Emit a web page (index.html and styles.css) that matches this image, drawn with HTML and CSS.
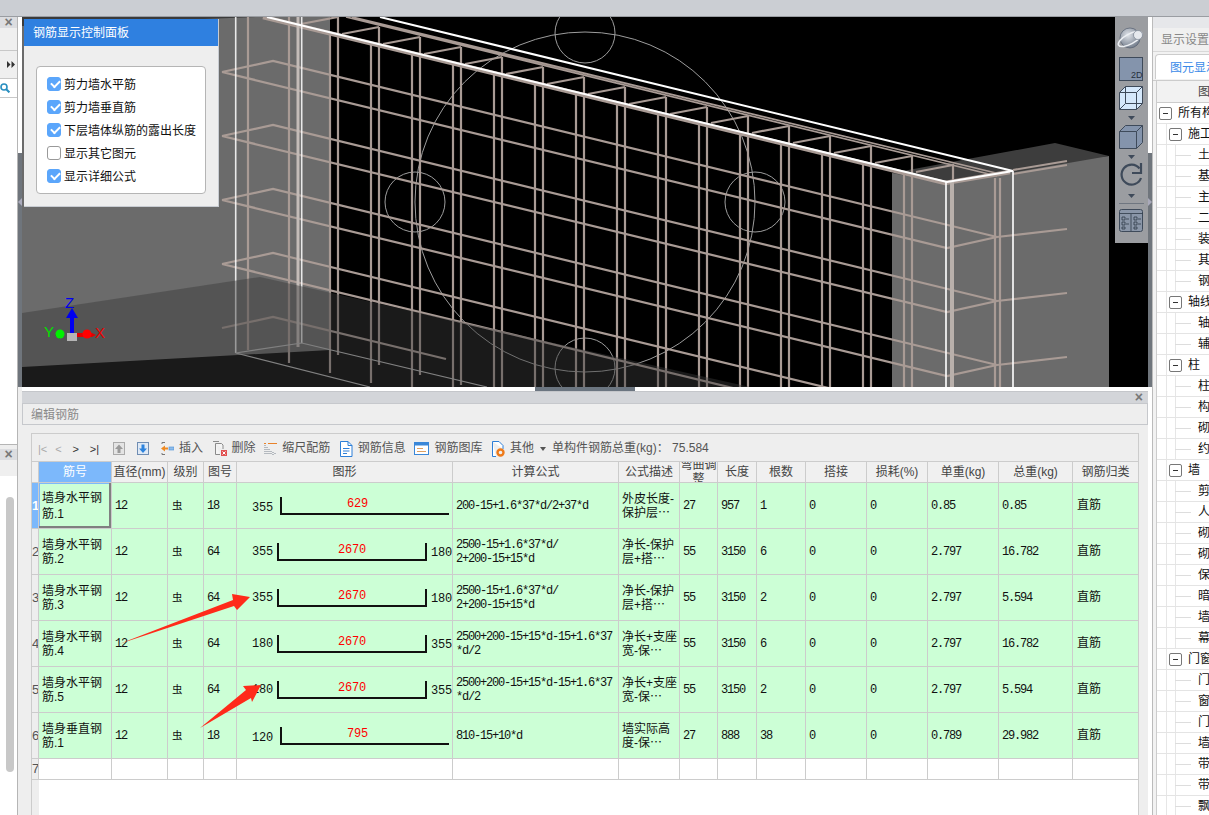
FILE: index.html
```html
<!DOCTYPE html>
<html lang="zh-CN">
<head>
<meta charset="utf-8">
<title>钢筋</title>
<link rel="stylesheet" href="styles.css">
</head>
<body>
<div class="topbar"></div>
<div class="main">
  <aside class="left">
    <div class="left-col">
      <div class="left-head"><span class="x">×</span></div>
      <div class="left-band"></div>
      <div class="left-arrows"><svg width="8" height="7" viewBox="0 0 8 7"><path d="M0 0L3.500 3.500L0 7ZM4.500 0L8 3.500L4.500 7Z" fill="#333"/></svg></div>
      <div class="left-search">
        <svg width="10" height="10" viewBox="0 0 10 10"><circle cx="4" cy="4" r="3" fill="none" stroke="#2a8fc0" stroke-width="1.6"/><path d="M6 6l3.400 3.400" stroke="#2a8fc0" stroke-width="2"/></svg>
      </div>
      <div class="left-blank"></div>
      <div class="left-gap"></div>
      <div class="left-head"><span class="x">×</span></div>
      <div class="left-scroll"><div class="thumb"></div></div>
    </div>
    <div class="left-strip"><span class="strip-top"></span><span class="strip-mid"><i class="tri-left"></i></span><span class="strip-bot"></span></div>
  </aside>

  <section class="center">
    <div class="scene">
      <svg class="scene-svg" width="1126" height="370" viewBox="22 17 1126 370">
        <defs>
          <radialGradient id="ball" cx=".4" cy=".35" r=".8"><stop offset="0" stop-color="#e4e7ec"/><stop offset="1" stop-color="#5f6a7a"/></radialGradient>
        </defs>
        <rect x="22" y="17" width="1126" height="370" fill="#000"/>
        <polygon points="22,17 330,17 330,350 22,367" fill="#6b6b6b"/>
        <polygon points="22,17 257,17 22,26" fill="#3a3a3a"/>
        <polygon points="892,173 1109,156 1109,387 892,387" fill="#6b6b6b"/>
        <polygon points="892,173 1055,143 1109,156 947,184" fill="#3d3d3d"/>
        <g fill="none" stroke="#9d9d9d" stroke-width="1">
          <circle cx="585" cy="202" r="170"/>
          <circle cx="585" cy="33" r="30"/>
          <circle cx="585" cy="368" r="30"/>
          <circle cx="415" cy="202" r="30"/>
          <circle cx="755" cy="202" r="30"/>
        </g>
        <g fill="none" stroke="#a99b95" stroke-width="2.200">
          <g id="layer">
            <path d="M222 72L273 61L997 237L1067 229M222 72L947 248L997 237"/>
          </g>
          <use href="#layer" transform="translate(0,64)"/>
          <use href="#layer" transform="translate(0,128)"/>
          <use href="#layer" transform="translate(0,192)"/>
          <path d="M222 328L273 317L446 359"/>
          <path d="M248 17V350M289 17V363M330 34V373M371 44V383M412 54V387M453 64V387M494 74V387M535 84V387M576 94V387M617 104V387M658 114V387M699 124V387M740 134V387M781 144V387M822 154V387M863 164V387M904 174V387"/>
          <path d="M338 17V355M379 27V365M420 37V375M461 47V385M502 57V387M543 67V387M584 77V387M625 87V387M666 97V387M707 107V387M748 116V387M789 126V387M830 136V387M871 146V387M912 156V387"/>
          <path d="M301 24L338 17M342 34L379 27M383 44L420 37M424 54L461 47M465 64L502 57M506 74L543 67M547 84L584 77M588 94L625 87M629 104L666 97M670 114L707 107M711 123L748 116M752 133L789 126M793 143L830 136M834 153L871 146M875 163L912 156M916 172L953 165V180"/>
          <path d="M995 178V387M1000 178V387M1013 170L1067 161M1013 174L1067 165"/>
          <path d="M352 17L1000 174M346 17L997 176" stroke-width="1.800"/>
          <path d="M263 17L945 183L1010 172" stroke-width="4.500"/>
        </g>
        <path d="M298 17V347" stroke="#c4bcb8" stroke-width="3" fill="none"/>
        <path d="M952 182V387" stroke="#b9b0ab" stroke-width="4" fill="none"/>
        <g fill="none" stroke="#fff">
          <path d="M267 17L947 182L1013 171M380 17L1013 171" stroke-width="2"/>
          <path d="M946 182V387M1013 171V387" stroke-width="1.600"/>
          <path d="M235.700 17V353M301.700 17V343" stroke-width="1.600" opacity=".85"/>
        </g>
        <path d="M301.700 343L235.700 353L370 387M301.700 343L487 387" fill="none" stroke="#bbb" stroke-width="1.200"/>
        <polygon points="22,313 260,277 750,387 22,387" fill="#3a3a3a" fill-opacity=".45"/>
        <text class="ax ax-z" x="65" y="308">Z</text>
        <text class="ax ax-y" x="44" y="337">Y</text>
        <text class="ax ax-x" x="95" y="338">X</text>
        <path d="M70 333V318H66L72 308L78 318H74V333Z" fill="#0000f0"/>
        <path d="M76 333H92L96 335L92 337H76Z" fill="#e00000"/>
        <path d="M55 335L60 331V339Z" fill="#0a7a0a"/>
        <circle cx="60" cy="334" r="4.500" fill="#00f000"/>
        <circle cx="87" cy="334" r="4.500" fill="#ff0000"/>
        <rect x="67" y="333" width="10" height="8" fill="#b5b5b5"/>
      </svg>

      <div class="ctrl">
        <div class="ctrl-head">钢筋显示控制面板</div>
        <div class="ctrl-body">
          <div class="ctrl-box">
            <label class="chk"><i class="box on"></i>剪力墙水平筋</label>
            <label class="chk"><i class="box on"></i>剪力墙垂直筋</label>
            <label class="chk"><i class="box on"></i>下层墙体纵筋的露出长度</label>
            <label class="chk"><i class="box"></i>显示其它图元</label>
            <label class="chk"><i class="box on"></i>显示详细公式</label>
          </div>
        </div>
      </div>

      <div class="viewbar">
        <svg width="33" height="226" viewBox="0 0 33 226">
          <defs>
            <radialGradient id="orb" cx=".4" cy=".35" r=".8"><stop offset="0" stop-color="#dfe3e9"/><stop offset="1" stop-color="#5f6a7a"/></radialGradient>
          </defs>
          <ellipse cx="15" cy="21" rx="10" ry="10" fill="url(#orb)" stroke="#4a5568" stroke-width=".6"/>
          <ellipse cx="15" cy="22" rx="13" ry="5" transform="rotate(-28 15 22)" fill="none" stroke="#eceff3" stroke-width="1.600"/>
          <circle cx="23" cy="18" r="4.500" fill="#e6e9ee" stroke="#6a7585" stroke-width=".6"/>
          <rect x="4.500" y="40.500" width="23" height="23" fill="#8494ac" stroke="#3e4a5a"/>
          <text class="vb-2d" x="16" y="61">2D</text>
          <path d="M4.500 75.500L10.500 69.500H27.500V86.500L21.500 92.500H4.500Z" fill="#d5e8fb" stroke="#3e4a5a"/>
          <path d="M4.500 75.500H21.500V92.500M21.500 75.500L27.500 69.500M10.500 69.500V86.500H27.500M10.500 86.500L4.500 92.500" fill="none" stroke="#3e4a5a"/>
          <path d="M13 99h7l-3.500 4z" fill="#3e4a5a"/>
          <path d="M4.500 114.500L10.500 108.500H27.500V125.500L21.500 131.500H4.500Z" fill="#8494ac" stroke="#3e4a5a"/>
          <path d="M4.500 114.500H21.500V131.500M21.500 114.500L27.500 108.500" fill="none" stroke="#3e4a5a"/>
          <path d="M13 138h7l-3.500 4z" fill="#3e4a5a"/>
          <path d="M24.500 151.500A10 10 0 1 0 26 161" fill="none" stroke="#3e4a5a" stroke-width="2.200"/>
          <path d="M26 146V156H17" fill="none" stroke="#3e4a5a" stroke-width="2.200"/>
          <path d="M13 177h7l-3.500 4z" fill="#3e4a5a"/>
          <path d="M4 186.500H29" stroke="#6f7680"/>
          <rect x="4.500" y="192.500" width="23" height="22" rx="2" fill="#8a96a8" stroke="#3e4a5a"/>
          <path d="M4.500 196.500H27.500M16 197V214M7 200h3v3H7zM7 205h3v3H7zM7 210h3v2H7zM19 200h3v3h-3zM19 205h3v3h-3zM19 210h3v2h-3zM11 202h3M11 207h3M23 202h3M23 207h3" fill="none" stroke="#2f3a48" stroke-width=".8"/>
        </svg>
      </div>
    </div>

    <div class="splitter"><span class="grip"></span></div>

    <div class="editor">
      <div class="ed-cap"><span class="x">×</span></div>
      <div class="ed-title">编辑钢筋</div>
      <div class="ed-body">
        <div class="grid">
          <div class="toolbar">
            <div class="pager"><span class="dim">|&lt;</span><span class="dim">&lt;</span><span>&gt;</span><span>&gt;|</span></div>
            <svg class="t-up" width="12" height="13" viewBox="0 0 12 13"><rect x=".5" y=".5" width="11" height="12" fill="#e4e4e4" stroke="#aaa"/><path d="M6 2.500L10 7H7.500V11H4.500V7H2Z" fill="#9a9a9a"/></svg>
            <svg class="t-down" width="12" height="13" viewBox="0 0 12 13"><rect x=".5" y=".5" width="11" height="12" fill="#dfe9f5" stroke="#6f8db3"/><path d="M6 11L2 6.500H4.500V2.500H7.500V6.500H10Z" fill="#2d83dd"/></svg>
            <div class="btns">
              <div class="btn"><svg width="13" height="15" viewBox="0 0 13 15"><path d="M1 1.500H4M1 13.500H4M1 1.500V3M1 12V13.500" stroke="#777" fill="none"/><path d="M0 7.500L4 4.500V6.500H7V8.500H4V10.500Z" fill="#ee8a22"/><rect x="8" y="6" width="5" height="3" fill="#8fbcea" stroke="#4a8fd8" stroke-width=".6"/></svg>插入</div>
              <div class="btn"><svg width="15" height="16" viewBox="0 0 15 16"><path d="M3.500 2.500H9.500L11 4V8M3.500 2.500V13.500H8" fill="#f4f4f4" stroke="#8a8a8a"/><path d="M1 .5H7" stroke="#8a8a8a"/><rect x="9" y="9" width="6" height="6" fill="#e05050"/><path d="M10.500 10.500l3 3m0-3l-3 3" stroke="#fff"/></svg>删除</div>
              <div class="btn"><svg width="13" height="15" viewBox="0 0 13 15"><path d="M0 2.500H2M4 2.500H13" stroke="#e8822a"/><path d="M1 4V14M3 6V14M5 8V14M7 10V14M9 11V14M11 12V14" stroke="#7a8490" stroke-dasharray="1 1"/></svg>缩尺配筋</div>
              <div class="btn"><svg width="14" height="16" viewBox="0 0 14 16"><path d="M1.500 .5H9L13 4.500V15.500H1.500Z" fill="#fff" stroke="#2d7fd8"/><path d="M9 .5V4.500H13M4 7.500H10.500M4 10H10.500M4 12.500H8" fill="none" stroke="#2d7fd8"/></svg>钢筋信息</div>
              <div class="btn"><svg width="15" height="13" viewBox="0 0 15 13"><rect x=".5" y=".5" width="14" height="12" fill="#fff" stroke="#3a87d8"/><rect x=".5" y=".5" width="14" height="3" fill="#3a87d8"/><path d="M3 6.500H9M3 9.500H12" stroke="#e0a060"/></svg>钢筋图库</div>
              <div class="btn"><svg width="14" height="16" viewBox="0 0 14 16"><path d="M1.500 .5H8L12 4.500V8M1.500 .5V15.500H5" fill="#fff" stroke="#2d7fd8"/><circle cx="9.500" cy="11.500" r="3" fill="none" stroke="#ee7a1a" stroke-width="2.400"/></svg>其他<i class="caret"></i></div>
            </div>
            <div class="total">单构件钢筋总重(kg)： 75.584</div>
          </div>
          <table class="rebar">
            <colgroup>
              <col class="c0"><col class="c1"><col class="c2"><col class="c3"><col class="c4"><col class="c5"><col class="c6"><col class="c7"><col class="c8"><col class="c9"><col class="c10"><col class="c11"><col class="c12"><col class="c13"><col class="c14"><col class="c15">
            </colgroup>
            <thead>
              <tr>
                <th></th><th class="sel-h">筋号</th><th>直径(mm)</th><th>级别</th><th>图号</th><th>图形</th><th>计算公式</th><th>公式描述</th><th><div class="clip">弯曲调整</div></th><th>长度</th><th>根数</th><th>搭接</th><th>损耗(%)</th><th>单重(kg)</th><th>总重(kg)</th><th>钢筋归类</th>
              </tr>
            </thead>
            <tbody>
              <tr>
                <th class="sel-n">1</th><td class="name sel-c">墙身水平钢筋.1</td><td class="m">12</td><td class="g">虫</td><td class="m">18</td>
                <td><div class="shape solo"><span class="n">355</span><div class="bar l-only"><span>629</span></div></div></td>
                <td class="m">200-15+1.6*37*d/2+37*d</td><td class="d">外皮长度-<br>保护层⋯</td><td class="m">27</td><td class="m">957</td><td class="m">1</td><td class="m">0</td><td class="m">0</td><td class="m">0.85</td><td class="m">0.85</td><td class="k">直筋</td>
              </tr>
              <tr>
                <th>2</th><td class="name">墙身水平钢筋.2</td><td class="m">12</td><td class="g">虫</td><td class="m">64</td>
                <td><div class="shape"><span class="n">355</span><div class="bar"><span>2670</span></div><span class="n r">180</span></div></td>
                <td class="m">2500-15+1.6*37*d/<br>2+200-15+15*d</td><td class="d">净长-保护<br>层+搭⋯</td><td class="m">55</td><td class="m">3150</td><td class="m">6</td><td class="m">0</td><td class="m">0</td><td class="m">2.797</td><td class="m">16.782</td><td class="k">直筋</td>
              </tr>
              <tr>
                <th>3</th><td class="name">墙身水平钢筋.3</td><td class="m">12</td><td class="g">虫</td><td class="m">64</td>
                <td><div class="shape"><span class="n">355</span><div class="bar"><span>2670</span></div><span class="n r">180</span></div></td>
                <td class="m">2500-15+1.6*37*d/<br>2+200-15+15*d</td><td class="d">净长-保护<br>层+搭⋯</td><td class="m">55</td><td class="m">3150</td><td class="m">2</td><td class="m">0</td><td class="m">0</td><td class="m">2.797</td><td class="m">5.594</td><td class="k">直筋</td>
              </tr>
              <tr>
                <th>4</th><td class="name">墙身水平钢筋.4</td><td class="m">12</td><td class="g">虫</td><td class="m">64</td>
                <td><div class="shape"><span class="n">180</span><div class="bar"><span>2670</span></div><span class="n r">355</span></div></td>
                <td class="m">2500+200-15+15*d-15+1.6*37<br>*d/2</td><td class="d">净长+支座<br>宽-保⋯</td><td class="m">55</td><td class="m">3150</td><td class="m">6</td><td class="m">0</td><td class="m">0</td><td class="m">2.797</td><td class="m">16.782</td><td class="k">直筋</td>
              </tr>
              <tr>
                <th>5</th><td class="name">墙身水平钢筋.5</td><td class="m">12</td><td class="g">虫</td><td class="m">64</td>
                <td><div class="shape"><span class="n">180</span><div class="bar"><span>2670</span></div><span class="n r">355</span></div></td>
                <td class="m">2500+200-15+15*d-15+1.6*37<br>*d/2</td><td class="d">净长+支座<br>宽-保⋯</td><td class="m">55</td><td class="m">3150</td><td class="m">2</td><td class="m">0</td><td class="m">0</td><td class="m">2.797</td><td class="m">5.594</td><td class="k">直筋</td>
              </tr>
              <tr>
                <th>6</th><td class="name">墙身垂直钢筋.1</td><td class="m">12</td><td class="g">虫</td><td class="m">18</td>
                <td><div class="shape solo"><span class="n">120</span><div class="bar l-only"><span>795</span></div></div></td>
                <td class="m">810-15+10*d</td><td class="d">墙实际高<br>度-保⋯</td><td class="m">27</td><td class="m">888</td><td class="m">38</td><td class="m">0</td><td class="m">0</td><td class="m">0.789</td><td class="m">29.982</td><td class="k">直筋</td>
              </tr>
              <tr class="empty">
                <th>7</th><td></td><td></td><td></td><td></td><td></td><td></td><td></td><td></td><td></td><td></td><td></td><td></td><td></td><td></td><td></td>
              </tr>
            </tbody>
          </table>
        </div>
      </div>
    </div>
  </section>

  <div class="mid-strip"><span class="ms-top"></span><span class="ms-bot"><i class="tri-right"></i></span></div>

  <aside class="right">
    <div class="r-head"></div>
    <div class="r-title">显示设置</div>
    <div class="r-tabs"><div class="r-tab">图元显示</div></div>
    <div class="r-table">
      <div class="r-colhead">图元</div>
      <div class="tree">
        <div class="row root"><i class="minus"></i>所有构件</div>
        <div class="row grp"><i class="minus"></i>施工段</div>
        <div class="row leaf">土方</div>
        <div class="row leaf">基础</div>
        <div class="row leaf">主体</div>
        <div class="row leaf">二次</div>
        <div class="row leaf">装修</div>
        <div class="row leaf">其它</div>
        <div class="row leaf">钢筋</div>
        <div class="row grp"><i class="minus"></i>轴线</div>
        <div class="row leaf">轴网</div>
        <div class="row leaf">辅助</div>
        <div class="row grp"><i class="minus"></i>柱</div>
        <div class="row leaf">柱</div>
        <div class="row leaf">构造</div>
        <div class="row leaf">砌体</div>
        <div class="row leaf">约束</div>
        <div class="row grp"><i class="minus"></i>墙</div>
        <div class="row leaf">剪力</div>
        <div class="row leaf">人防</div>
        <div class="row leaf">砌体</div>
        <div class="row leaf">砌体</div>
        <div class="row leaf">保温</div>
        <div class="row leaf">暗梁</div>
        <div class="row leaf">墙垛</div>
        <div class="row leaf">幕墙</div>
        <div class="row grp"><i class="minus"></i>门窗</div>
        <div class="row leaf">门</div>
        <div class="row leaf">窗</div>
        <div class="row leaf">门联</div>
        <div class="row leaf">墙洞</div>
        <div class="row leaf">带形</div>
        <div class="row leaf">带形</div>
        <div class="row leaf">飘窗</div>
      </div>
    </div>
  </aside>
</div>

<svg class="arrows" width="1209" height="815" viewBox="0 0 1209 815">
  <polygon points="119,644 233,600 232,594 250,597 237,610 234,606" fill="#ff2a1a"/>
  <polygon points="200,728 246,690 243,686 261,685 252,702 251,698" fill="#ff2a1a"/>
</svg>
</body>
</html>
```

FILE: styles.css
```css
* { box-sizing: border-box; }
html, body { margin: 0; height: 815px; overflow: hidden; }
body {
  position: relative;
  width: 1209px;
  background: #fff;
  font: 12px/1.2 "Liberation Sans", "Noto Sans CJK SC", sans-serif;
  color: #222;
}
i { font-style: normal; }

.topbar { height: 17px; background: #cbced3; border-bottom: 1px solid #9a9da2; }
.main { display: flex; height: 798px; }

/* left rail */
.left { width: 22px; display: flex; flex: none; }
.left-col { width: 18px; border-right: 1px solid #b5b5b5; display: flex; flex-direction: column; }
.left-head { height: 11px; background: #dcdde0; display: flex; align-items: center; justify-content: center; flex: none; }
.x { font-size: 14px; line-height: 11px; color: #777; font-weight: bold; }
.left-band { height: 23px; background: #efefef; border-bottom: 1px solid #c8c8c8; flex: none; }
.left-arrows { height: 28px; background: #efefef; border-bottom: 1px solid #c8c8c8; display: flex; align-items: center; justify-content: flex-end; padding-right: 2px; flex: none; }
.left-search { height: 19px; border-bottom: 1px solid #c8c8c8; padding: 4px 0 0 0; flex: none; }
.left-search svg { display: block; }
.left-blank { height: 347px; border-bottom: 1px solid #b5b5b5; flex: none; }
.left-gap { height: 4px; background: #eee; flex: none; }
.left-scroll { flex: 1; padding: 37px 3px 0 6px; background: linear-gradient(#efefef 16px, #fff 16px); }
.thumb { width: 8px; height: 275px; background: #c8c8c8; border-radius: 4px; }
.left-strip { width: 4px; display: flex; flex-direction: column; }
.strip-top { height: 136px; background: #fff; }
.strip-mid { height: 234px; background: #6f757c; position: relative; }
.strip-bot { flex: 1; background: #eee; }
.tri-left { position: absolute; left: 0; top: 45px; border: 4px solid transparent; border-left: 0; border-right-color: #aab; }

/* centre */
.center { width: 1126px; flex: none; display: flex; flex-direction: column; }
.scene { position: relative; height: 370px; flex: none; }
.scene-svg { display: block; }
.ax { font: 15px "Liberation Sans", sans-serif; }
.ax-z { fill: #0000f0; }
.ax-y { fill: #00e000; }
.ax-x { fill: #ee0000; }

.ctrl { position: absolute; left: 2px; top: 2px; width: 195px; height: 188px; background: #eee; border: 1px solid #c8ccd2; border-top: 0; border-left: 0; }
.ctrl-head { height: 27px; background: #2f80e0; color: #fff; font-size: 12px; line-height: 28px; padding-left: 9px; }
.ctrl-body { padding: 20px 12px 0; }
.ctrl-box { height: 128px; background: #fff; border: 1px solid #b5b5b5; border-radius: 4px; padding: 10px 0 0 10px; display: flex; flex-direction: column; gap: 9px; }
.chk { display: flex; align-items: center; height: 14px; gap: 3px; font-size: 12px; color: #111; white-space: nowrap; padding-top: 2px; }
.box { width: 14px; height: 14px; flex: none; border: 1px solid #999; border-radius: 3px; background: #fff; position: relative; margin-top: -2px; }
.box.on { background: #5ba6fb; border-color: #5ba6fb; }
.box.on::after { content: ""; position: absolute; left: 3px; top: 2px; width: 7px; height: 4px; border: solid #fff; border-width: 0 0 2px 2px; transform: rotate(-45deg); }

.viewbar { position: absolute; right: 0; top: 0; width: 33px; height: 226px; background: #9b9da1; }
.viewbar svg { display: block; }
.vb-2d { font: 9px "Liberation Sans", sans-serif; fill: #26303c; }

.splitter { height: 4px; background: #fff; display: flex; justify-content: center; flex: none; }
.grip { width: 100px; height: 4px; background: #6b7580; }

.editor { flex: 1; display: flex; flex-direction: column; min-height: 0; background: #eee; }
.ed-cap { height: 12px; background: #d3d5d9; border-top: 1px solid #c4c6ca; display: flex; align-items: center; justify-content: flex-end; padding-right: 5px; flex: none; }
.ed-title { height: 22px; background: #eee; border: 1px solid #c6c8cc; color: #8a8a8a; font-size: 12px; line-height: 22px; padding-left: 8px; flex: none; }
.ed-body { flex: 1; padding: 8px 9px 0; min-height: 0; }
.grid { height: 100%; border: 1px solid #ccc; border-bottom: 0; background: linear-gradient(90deg, #eee 7px, #fff 7px); }

.toolbar { height: 28px; background: #eee; border-bottom: 1px solid #ccc; display: flex; align-items: center; padding: 2px 0 0 6px; color: #555; white-space: nowrap; }
.pager { display: flex; width: 69px; font: 11px "Liberation Sans", sans-serif; color: #333; flex: none; }
.pager span { width: 18px; }
.pager .dim { color: #aaa; }
.t-up { margin: 0 12px 0 6px; flex: none; }
.t-down { margin-right: 12px; flex: none; }
.btns { display: flex; gap: 8.600px; align-items: center; }
.btn { display: flex; gap: 5px; align-items: center; }
.caret { border: 3px solid transparent; border-top: 4px solid #555; border-bottom: 0; margin-left: 1px; }
.total { margin-left: 6px; }

.rebar { table-layout: fixed; border-collapse: separate; border-spacing: 0; width: 1106px; }
.c0 { width: 7px; } .c1 { width: 73px; } .c2 { width: 56px; } .c3 { width: 36px; }
.c4 { width: 33px; } .c5 { width: 216px; } .c6 { width: 166px; } .c7 { width: 61px; }
.c8 { width: 38px; } .c9 { width: 39px; } .c10 { width: 49px; } .c11 { width: 61px; }
.c12 { width: 61px; } .c13 { width: 71px; } .c14 { width: 74px; } .c15 { width: 65px; }

.rebar th, .rebar td { border-right: 1px solid #ccc; border-bottom: 1px solid #ccc; padding: 0; overflow: hidden; white-space: nowrap; }
.rebar th:last-child, .rebar td:last-child { border-right: 0; }
.rebar thead th { height: 21px; background: #f0f0f0; font-weight: normal; color: #444; text-align: center; font-size: 12px; }
.rebar thead th.sel-h { background: #7cb8fb; color: #fff; }
.clip { height: 20px; display: flex; align-items: center; justify-content: center; white-space: normal; line-height: 14px; overflow: hidden; }
.rebar tbody tr { height: 46px; }
.rebar tbody td { background: #ccffd6; padding-left: 3px; color: #111; }
.rebar tbody th { background: #eee; font-weight: normal; font-size: 13px; color: #555; text-align: center; }
.rebar tbody th.sel-n { background: #7cb8fb; color: #fff; font-weight: bold; }
.rebar tbody tr.empty { height: 21px; }
.rebar tbody tr.empty td { background: #fff; }
td.name { white-space: normal !important; line-height: 14px; word-break: break-all; font-size: 12px; padding-right: 3px; }
td.sel-c { line-height: 16px; box-shadow: inset -2px -2px 0 #808080, inset 1px 1px 0 #7cb8fb; }
td.m { font: 12px/14px "Liberation Mono", monospace; letter-spacing: -1.200px; }
td.g { padding-left: 4px !important; font-size: 10.500px; }
td.d { line-height: 14px; font-size: 12px; }
td.k { padding-left: 4px !important; }

.shape { display: flex; align-items: center; padding-left: 12px; }
.n { font: 12px "Liberation Mono", monospace; letter-spacing: -.2px; color: #111; width: 25px; flex: none; }
.solo .n { margin-top: 5px; }
.n.r { margin: 2px 0 0 4px; }
.bar { width: 150px; height: 18px; border: solid #111; border-width: 0 2px 2px; color: #f00; font: 12px/14px "Liberation Mono", monospace; text-align: center; letter-spacing: -.2px; flex: none; }
.bar span { display: block; }
.l-only { width: 169px; margin-left: 3px; border-right: 0; padding-right: 16px; }

/* strip between scene and right panel */
.mid-strip { width: 4px; flex: none; display: flex; flex-direction: column; }
.ms-top { height: 136px; background: #fff; }
.ms-bot { height: 234px; background: #6f757c; position: relative; }
.tri-right { position: absolute; left: 0; top: 45px; border: 4px solid transparent; border-right: 0; border-left-color: #aab; }

/* right panel */
.right { flex: 1; min-width: 0; border-left: 1px solid #bbb; overflow: hidden; background: #f2f2f2; }
.r-head { height: 11px; background: #e6e7ea; }
.r-title { height: 24px; line-height: 24px; padding-left: 8px; color: #888; white-space: nowrap; background: #f0f0f0; border-bottom: 1px solid #d8d8d8; }
.r-tabs { height: 29px; padding: 2px 0 0 2px; overflow: hidden; border-bottom: 1px solid #ccc; }
.r-tab { height: 25px; width: 80px; background: #fff; border: 1px solid #ccc; border-bottom: 0; border-radius: 4px 0 0 0; color: #3a8ae8; line-height: 26px; padding-left: 14px; white-space: nowrap; }
.r-table { margin-left: 3px; border-left: 1px solid #ccc; background: #fff; }
.r-colhead { height: 22px; line-height: 22px; background: #f2f2f2; border-bottom: 1px solid #ccc; padding-left: 41px; color: #444; white-space: nowrap; }
.tree { background: linear-gradient(#e6e6e6, #e6e6e6) 9px 0 / 1px 100% no-repeat; }
.row { height: 21px; line-height: 20px; border-bottom: 1px solid #e4e4e4; display: flex; align-items: center; white-space: nowrap; color: #111; }
.leaf { padding-left: 41px; background: linear-gradient(#ddd, #ddd) 18px center / 16px 1px no-repeat, linear-gradient(#e6e6e6, #e6e6e6) 18px 0 / 1px 100% no-repeat; }
.grp { padding-left: 12px; }
.root { padding-left: 2px; background: #fff; }
.minus { width: 13px; height: 13px; flex: none; margin-right: 6px; border: 1px solid #777; border-radius: 2px; background: #fff; position: relative; }
.minus::after { content: ""; position: absolute; left: 3px; right: 3px; top: 5px; height: 1px; background: #333; }

.arrows { position: absolute; left: 0; top: 0; pointer-events: none; }
```
